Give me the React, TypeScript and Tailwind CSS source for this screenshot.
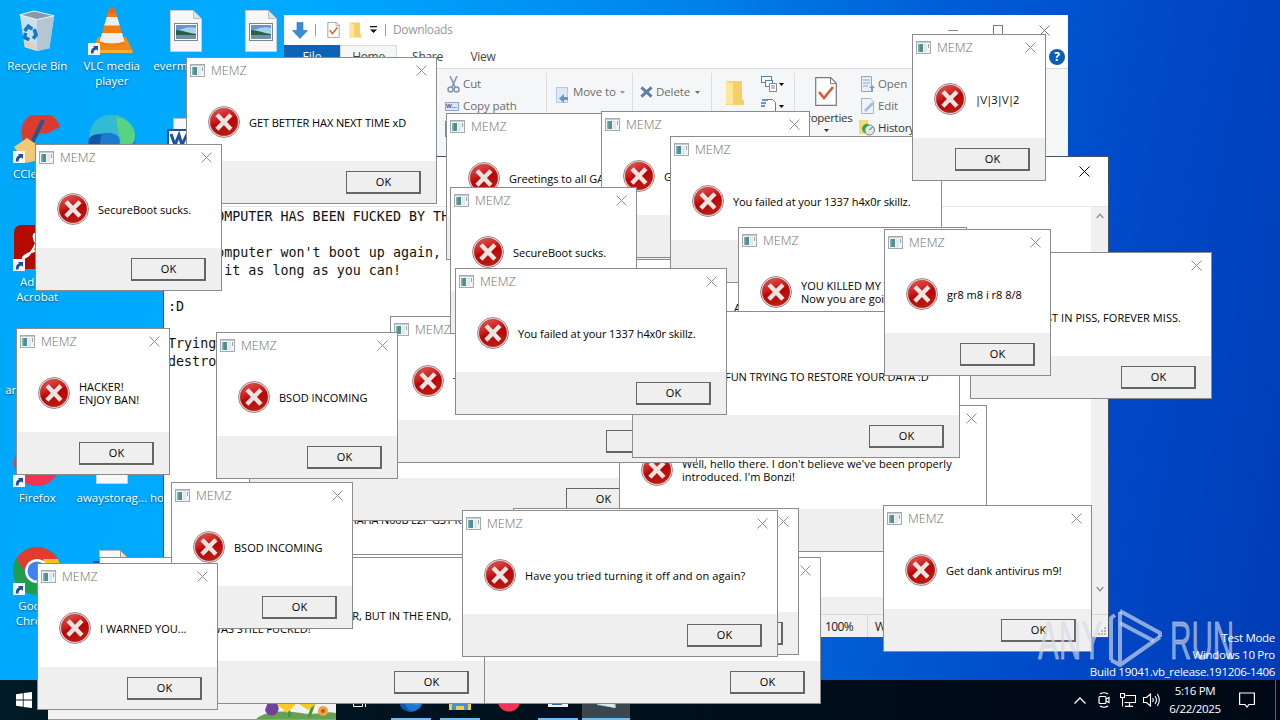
import type { ReactNode } from "react";

type DialogData = {
  x: number;
  y: number;
  w: number;
  lines?: string[];
  textClass?: string;
};

// Painted in order, the last one is on top
const dialogs: DialogData[] = [
  { x: 271, y: 454, w: 246, lines: ["HAHAHA N00B L2P G3T R3KT"], textClass: "tracking-[-0.15px]" },
  { x: 345, y: 554, w: 136 },
  { x: 249, y: 374, w: 408 },
  { x: 619, y: 405, w: 368, lines: ["Well, hello there. I don't believe we've been properly", "introduced. I'm Bonzi!"], textClass: "tracking-[0.05px]" },
  { x: 390, y: 316, w: 307, lines: ["T"] },
  { x: 446, y: 113, w: 240, lines: ["Greetings to all GAMERS"] },
  { x: 601, y: 111, w: 209, lines: ["Get dank antivirus m9!"] },
  { x: 450, y: 187, w: 187, lines: ["SecureBoot sucks."] },
  { x: 671, y: 242, w: 200, lines: ["A new"], textClass: "-ml-2" },
  { x: 670, y: 136, w: 272, lines: ["You failed at your 1337 h4x0r skillz."], textClass: "tracking-[-0.08px]" },
  { x: 738, y: 227, w: 229, lines: ["YOU KILLED MY TROJAN!", "Now you are going to die."] },
  { x: 632, y: 311, w: 328, lines: ["HAVE FUN TRYING TO RESTORE YOUR DATA :D"], textClass: "tracking-[-0.1px]" },
  { x: 455, y: 268, w: 272, lines: ["You failed at your 1337 h4x0r skillz."], textClass: "tracking-[-0.08px]" },
  { x: 970, y: 252, w: 242, lines: ["REST IN PISS, FOREVER MISS."], textClass: "tracking-[0.04px]" },
  { x: 884, y: 229, w: 167, lines: ["gr8 m8 i r8 8/8"] },
  { x: 912, y: 34, w: 134, lines: ["|\\/|3|\\/|2"], textClass: "tracking-[-0.95px]" },
  { x: 186, y: 57, w: 251, lines: ["GET BETTER HAX NEXT TIME xD"], textClass: "tracking-[-0.1px]" },
  { x: 35, y: 144, w: 187, lines: ["SecureBoot sucks."] },
  { x: 216, y: 332, w: 182, lines: ["BSOD INCOMING"] },
  { x: 16, y: 328, w: 154, lines: ["HACKER!", "ENJOY BAN!"] },
  { x: 470, y: 557, w: 351 },
  { x: 99, y: 557, w: 386, lines: ["YOU TRIED SO HARD AND GOT SO FAR, BUT IN THE END,", "YOUR PC WAS STILL FUCKED!"] },
  { x: 171, y: 482, w: 182, lines: ["BSOD INCOMING"] },
  { x: 37, y: 563, w: 181, lines: ["I WARNED YOU..."] },
  { x: 513, y: 508, w: 286 },
  { x: 462, y: 510, w: 316, lines: ["Have you tried turning it off and on again?"], textClass: "tracking-[0.12px]" },
  { x: 883, y: 505, w: 209, lines: ["Get dank antivirus m9!"] },
];

function CloseIcon({ className = "text-[#8c8c8c]" }: { className?: string }) {
  return (
    <svg className={`w-[11px] h-[11px] shrink-0 ${className}`} viewBox="0 0 11 11" fill="none" stroke="currentColor" strokeWidth="1">
      <path d="M.5 .5l10 10M10.5 .5l-10 10" />
    </svg>
  );
}

function AppIcon() {
  return (
    <svg className="w-[15px] h-[13px] shrink-0" viewBox="0 0 15 13">
      <rect x=".5" y=".5" width="14" height="12" fill="#f2f4f5" stroke="#a3abb0" />
      <path d="M1 1.5h13" stroke="#c3ccd0" />
      <rect x="2" y="3" width="5" height="8" fill="#4f9189" />
      <path d="M2 3h1.500v8H2z" fill="#86aebb" />
      <rect x="8" y="3" width="3" height="8" fill="#dfe8f0" />
      <path d="M12.5 3v4" stroke="#9aa5a8" />
    </svg>
  );
}

function ErrorIcon() {
  return (
    <svg className="w-8 h-8 shrink-0" viewBox="0 0 32 32">
      <defs>
        <linearGradient id="errRed" x1="0" y1="0" x2="0.4" y2="1">
          <stop offset="0" stopColor="#e4605a" />
          <stop offset=".45" stopColor="#cc2020" />
          <stop offset=".6" stopColor="#b90508" />
          <stop offset="1" stopColor="#bd1a12" />
        </linearGradient>
      </defs>
      <circle cx="16" cy="16" r="15.5" fill="#e9e2e0" stroke="#8d6a68" strokeWidth=".8" />
      <circle cx="16" cy="16" r="13.8" fill="url(#errRed)" stroke="#a4201f" strokeWidth=".5" />
      <path d="M10.6 10.300l10.800 11.400M21.400 10.300L10.400 21.700" stroke="#e9e6e2" strokeWidth="4.4" strokeLinecap="square" />
    </svg>
  );
}

function Dialog({ x, y, w, lines = [], textClass = "" }: DialogData) {
  return (
    <div
      className="absolute flex h-[147px] flex-col border border-[#8b8b8b] bg-white"
      style={{ left: x, top: y, width: w }}
    >
      <div className="flex h-6 shrink-0 items-center pl-[3px] pr-[9px]">
        <AppIcon />
        <span className="ml-[6px] flex-1 text-[12.5px] font-light leading-[23px] text-[#707070]">MEMZ</span>
        <CloseIcon />
      </div>
      <div className="flex flex-1 items-start pl-[21px] pt-6">
        <ErrorIcon />
        <div className={`ml-[9px] flex h-8 flex-col justify-center whitespace-nowrap text-[11px] leading-[13px] text-black ${textClass}`}>
          {lines.map((line) => (
            <div key={line}>{line}</div>
          ))}
        </div>
      </div>
      <div className="flex h-[42px] shrink-0 items-start justify-end bg-[#efefef] pr-[15px] pt-[10px]">
        <button className="h-[23px] w-[75px] border border-b-2 border-r-2 border-[#656565] bg-[#efefef] pl-px text-[11px] leading-[20px] text-black">
          OK
        </button>
      </div>
    </div>
  );
}

function Shortcut() {
  return (
    <svg className="absolute left-0 bottom-0 h-3 w-3" viewBox="0 0 12 12">
      <rect width="12" height="12" fill="#f4f8fc" />
      <path d="M3 10.5C2.6 7 4 5 6.2 4.6L5 3h5v5L8.600 6.500C6 7 5.500 8.500 5.500 10.500z" fill="#1f4f9c" />
    </svg>
  );
}

function PictureFile() {
  return (
    <svg className="h-[42px] w-8" viewBox="0 0 32 42">
      <path d="M.5 .5h23l8 8v33H.5z" fill="#f7f7f7" stroke="#c9cdd0" />
      <path d="M23.500 .5v8h8z" fill="#dfe3e6" stroke="#a9b0b5" strokeWidth=".7" />
      <rect x="4.500" y="13.500" width="23" height="17" fill="#fff" stroke="#7f868b" />
      <rect x="6" y="15" width="20" height="14" fill="#a9d1ee" />
      <path d="M6 15h20v3c-7-2-14 1-20 3z" fill="#6295d2" />
      <path d="M6 20c6 0 12 3 20 4v1H6z" fill="#2d5f46" />
      <path d="M6 25h20v4H6z" fill="#6b95a6" />
    </svg>
  );
}

function WordFile() {
  return (
    <svg className="h-[42px] w-10" viewBox="0 0 40 42">
      <path d="M7.500 .5h21l8 8v33h-29z" fill="#f9f9f9" stroke="#b8bcc0" />
      <path d="M28.500 .5v8h8z" fill="#e4e4e4" stroke="#888" strokeWidth=".8" />
      <rect x="1" y="11" width="24" height="22" fill="#1d50a8" />
      <rect x="3" y="13" width="20" height="18" fill="#fff" />
      <path d="M5 16l4 11 4-10 3 10 5-11" fill="none" stroke="#1d50a8" strokeWidth="3" />
      <path d="M27 15h7M27 20h7M27 25h7M27 30h7" stroke="#5b83bd" />
    </svg>
  );
}

function RecycleBin() {
  return (
    <svg className="h-[44px] w-[40px]" viewBox="0 0 42 44">
      <path d="M3 5l36 1-5 34-13 3-13-4z" fill="#dbe4ea" opacity=".92" />
      <path d="M21 9l18-3-5 34-13 3z" fill="#b5c6d3" />
      <path d="M3 5l15-4 21 5-18 4z" fill="#8798a6" stroke="#eef5fa" />
      <path d="M8 32l12 4v6l-11-3z" fill="#e8cdbd" />
      <g fill="none" stroke="#1678c7" strokeWidth="3.800">
        <path d="M8 22l4-5 4 3M18 20l2 6-3 4M13 31l-5-2 1-5" />
      </g>
    </svg>
  );
}

function VlcIcon() {
  return (
    <svg className="h-[46px] w-11" viewBox="0 0 44 46">
      <path d="M8 29h28l7 14q0 2-2 2H3q-2 0-2-2z" fill="#f28a12" />
      <path d="M2 42h40v3H2z" fill="#fbb03a" />
      <path d="M19 1q3-2 6 0l10 35q-13 6-26 0z" fill="#f27c0e" />
      <path d="M16.800 9h10.400l2.600 8.500H14.200zM12 25h20l2.500 8.500q-12.500 4-25 0z" fill="#edeef0" />
      <path d="M19 1q3-2 6 0l.8 4h-7.600z" fill="#e0671b" />
    </svg>
  );
}

function CCleanerIcon() {
  return (
    <svg className="h-12 w-12" viewBox="0 0 48 48">
      <path d="M47 12A19 19 0 0 0 9 22Q10 36 22 42L44 38 34 33A8 8 0 1 1 33 19z" fill="#dc3b2f" />
      <path d="M30 5L19 28" stroke="#24578b" strokeWidth="4" />
      <path d="M1 32l13-9 9 6 3 16-13 3z" fill="#f3c877" />
    </svg>
  );
}

function EdgeIcon() {
  return (
    <svg className="h-12 w-12" viewBox="0 0 48 48">
      <circle cx="24" cy="24" r="23.500" fill="#1b79cf" />
      <path d="M1 24a23 23 0 0 1 46-3c1 9-8 13-17 11 5-8-1-15-10-14C11 18 3 20 1 24z" fill="#33bbd5" />
      <path d="M28 2c13 2 20 11 19 20-1 8-9 12-17 10 4-5 3-9 1-12z" fill="#58d481" />
      <path d="M14 20c-6 12 2 24 14 27C9 49-2 36 1 24c3-5 8-5 13-4z" fill="#1255a5" />
    </svg>
  );
}

function AcrobatIcon() {
  return (
    <svg className="h-[44px] w-[46px]" viewBox="0 0 46 44">
      <rect width="46" height="44" rx="7" fill="#b30b00" />
      <path d="M10 33c6-2 14-14 13-22-1-4-4-2-3 2 2 8 8 13 16 14 4 0 3-4-2-4-8 0-15 3-22 7-3 2-4 4-2 3z" fill="none" stroke="#fff" strokeWidth="2.200" />
    </svg>
  );
}

function FirefoxIcon() {
  return (
    <svg className="h-12 w-12" viewBox="0 0 48 48">
      <circle cx="24" cy="24" r="23" fill="#f5324f" />
      <circle cx="26" cy="22" r="11" fill="#7b3fe4" />
      <path d="M24 1c14 2 22 10 23 20-5-6-9-6-13-8z" fill="#ffbd2f" />
    </svg>
  );
}

function ChromeIcon() {
  return (
    <svg className="h-12 w-12" viewBox="0 0 48 48">
      <circle cx="24" cy="24" r="24" fill="#1f9d4c" />
      <path d="M3.500 12A24 24 0 0 1 44.800 12L24 14l-9 14z" fill="#e33b2e" />
      <path d="M44.800 12A24 24 0 0 1 24 48l10-18-4-18z" fill="#fbc116" />
      <circle cx="24" cy="24" r="12" fill="#fff" />
      <circle cx="24" cy="24" r="9.500" fill="#3f83f1" />
    </svg>
  );
}

type DesktopItem = { label?: string; icon?: ReactNode; shortcut?: boolean };

const desktopItems: DesktopItem[] = [
  { label: "Recycle Bin", icon: <RecycleBin /> },
  { label: "VLC media player", icon: <VlcIcon />, shortcut: true },
  { label: "evermedia...", icon: <PictureFile /> },
  { icon: <PictureFile /> },
  { label: "CCleaner", icon: <CCleanerIcon />, shortcut: true },
  { icon: <EdgeIcon /> },
  { icon: <WordFile /> },
  {},
  { label: "Adobe Acrobat", icon: <AcrobatIcon />, shortcut: true },
  {},
  {},
  {},
  { label: "areaenglis...", icon: <WordFile /> },
  {},
  {},
  {},
  { label: "Firefox", icon: <FirefoxIcon />, shortcut: true },
  { label: "awaystorag...", icon: <PictureFile /> },
  { label: "homebooks..." },
  {},
  { label: "Google Chrome", icon: <ChromeIcon />, shortcut: true },
  { icon: <WordFile /> },
  {},
  {},
];

function DesktopIcons() {
  return (
    <div className="grid w-[298px] auto-rows-[108px] grid-cols-4">
      {desktopItems.map((item, i) => (
        <div key={i} className="flex flex-col items-center pt-[7px]">
          <div className="relative flex h-12 w-12 shrink-0 items-center justify-center">
            {item.icon}
            {item.shortcut && <Shortcut />}
          </div>
          <div className="mt-[3px] w-[73px] text-center text-[11.5px] leading-[15px] text-white [text-shadow:0_1px_2px_rgba(0,0,0,0.55)]">
            {item.label}
          </div>
        </div>
      ))}
    </div>
  );
}

function Caret({ className = "text-black" }: { className?: string }) {
  return (
    <svg className={`h-[3px] w-[5px] shrink-0 ${className}`} viewBox="0 0 5 3" fill="currentColor">
      <path d="M0 0h5L2.500 3z" />
    </svg>
  );
}

function Folder({ className }: { className: string }) {
  return (
    <svg className={className} viewBox="0 0 20 28" preserveAspectRatio="none">
      <path d="M1 1h16v20l2 1v5H1z" fill="#f6cf66" />
      <path d="M1 1l7 3v24l-7-3z" fill="#ffe69a" />
    </svg>
  );
}

function CheckPage({ className }: { className: string }) {
  return (
    <svg className={className} viewBox="0 0 22 29" fill="none">
      <path d="M.7 .7h15l5.600 5.600v22H.7z" fill="#fff" stroke="#7a7a7a" strokeWidth="1.200" />
      <path d="M15.500 .7v6h6" stroke="#7a7a7a" />
      <path d="M4 15l5 6 9-11" stroke="#e2562b" strokeWidth="2.600" />
    </svg>
  );
}

function Explorer() {
  return (
    <div className="absolute left-[284px] top-[15px] h-[160px] w-[784px] bg-white text-[12px] leading-[16px] text-[#6d6d6d]">
      <div className="flex h-[30px] items-center pl-2 pr-[18px]">
        <svg className="h-[17px] w-4" viewBox="0 0 16 17">
          <path d="M5 .5h6v8h4.500L8 16.500 .5 8.500H5z" fill="#3a8bd6" stroke="#2a6fb5" strokeWidth=".6" />
        </svg>
        <div className="ml-[7px] h-3 w-px bg-[#9a9a9a]" />
        <CheckPage className="ml-[11px] h-4 w-[13px]" />
        <Folder className="ml-[9px] h-4 w-[13px]" />
        <svg className="ml-2 h-2 w-[7px]" viewBox="0 0 7 8">
          <path d="M0 0h7v1.200H0zM0 3.500h7L3.500 7z" fill="#111" />
        </svg>
        <div className="ml-2 h-3 w-px bg-[#9a9a9a]" />
        <span className="ml-[7px] flex-1 tracking-[-0.35px] text-[#999]">Downloads</span>
        <div className="h-px w-[10px] bg-[#888]" />
        <div className="ml-[35px] mr-[36px] size-[10px] border border-[#777]" />
        <CloseIcon className="text-[#777]" />
      </div>
      <div className="flex h-[23px] leading-[24px] text-[#444]">
        <div className="w-14 bg-[#0d63b5] text-center text-white">File</div>
        <div className="w-[57px] border border-b-0 border-[#dadbdc] bg-[#f5f6f7] text-center leading-[22px] tracking-[-0.3px]">Home</div>
        <div className="w-[61px] text-center tracking-[-0.3px]">Share</div>
        <div className="w-[50px] text-center tracking-[-0.3px]">View</div>
        <div className="flex flex-1 items-center justify-end pr-[3px]">
          <div className="size-4 rounded-full bg-[#0a5eb8] text-center text-[12px] font-bold leading-4 text-white">?</div>
        </div>
      </div>
      <div className="flex h-[107px] items-start border-t border-[#dadbdc] bg-[#f5f6f7] pt-1 text-[11.5px] tracking-[-0.1px]">
        <div className="flex h-[88px] w-[263px] flex-col border-r border-[#dcdde0] pl-[161px]">
          <div className="flex h-[22px] items-center gap-[3px] pl-0.5">
            <svg className="h-[17px] w-[13px]" viewBox="0 0 13 17" fill="none" stroke="#7e93b3" strokeWidth="1.500">
              <path d="M3 0l5 11M10 0L5 11" />
              <circle cx="3.500" cy="13.500" r="2.500" />
              <circle cx="9.500" cy="13.500" r="2.500" />
            </svg>
            <span>Cut</span>
          </div>
          <div className="flex h-[22px] items-center gap-1">
            <div className="h-[9px] w-[14px] border border-[#8ca7d8] bg-[#dce6f8] text-[6px] font-bold leading-[7px] text-[#3e5f9c]">W...</div>
            <span>Copy path</span>
          </div>
          <div className="mt-1 h-4 w-3 border-2 border-[#7c889c]" />
          <div className="-ml-[62px] mt-[5px] leading-4">Clipboard</div>
        </div>
        <div className="flex h-[42px] w-[86px] items-center border-r border-[#dcdde0] pl-[9px]">
          <svg className="-mb-px h-4 w-[13px]" viewBox="0 0 13 16">
            <rect x=".5" y=".5" width="11" height="15" fill="#dce8f6" stroke="#b5c9e4" />
            <path d="M12 10H8V7l-5 4.500L8 16v-3h4z" fill="#6c93c9" />
          </svg>
          <span className="ml-[4px] -mt-1 whitespace-nowrap">Move to</span>
          <Caret className="-mt-1 ml-[4px] text-[#9a9a9a]" />
        </div>
        <div className="flex h-[42px] w-[79px] items-center border-r border-[#dcdde0] pb-1 pl-[7px]">
          <svg className="h-3 w-[13px]" viewBox="0 0 14 12" stroke="#5f7da6" strokeWidth="3.200">
            <path d="M1.500 1l11 10M12.500 1l-11 10" />
          </svg>
          <span className="ml-[3px]">Delete</span>
          <Caret className="ml-[5px]" />
        </div>
        <div className="flex h-[88px] w-[83px] items-start border-r border-[#dcdde0] pl-[13px] pt-[7px]">
          <Folder className="h-[26px] w-[20px]" />
          <div className="-mt-1 ml-4 flex flex-col gap-[6px]">
            <div className="flex items-center gap-[2px]">
              <svg className="h-4 w-4" viewBox="0 0 16 16" fill="#fff" stroke="#4f83a8">
                <rect x=".5" y=".5" width="10" height="6" />
                <rect x="4.500" y="4.500" width="7" height="6" />
                <path d="M8.500 7.500h7v8h-7zM10 10h4M10 12h4" stroke="#888" />
              </svg>
              <Caret />
            </div>
            <div className="flex items-center gap-[2px]">
              <svg className="h-4 w-4" viewBox="0 0 16 16" fill="none">
                <path d="M6.500 1.500h5l3 3v11h-8" fill="#fff" stroke="#777" />
                <path d="M1 2h6M0 5h5M0 8h4" stroke="#3978b5" strokeWidth="1.500" />
              </svg>
              <Caret />
            </div>
          </div>
        </div>
        <div className="flex h-[88px] w-[64px] flex-col items-center pr-[2px] pt-1 text-[#333]">
          <CheckPage className="h-[29px] w-[22px]" />
          <span className="mt-1 tracking-[-0.3px]">Properties</span>
          <Caret className="mt-[3px]" />
        </div>
        <div className="flex flex-col pl-0.5">
          <div className="flex h-[22px] items-center gap-[3px]">
            <svg className="h-4 w-[14px]" viewBox="0 0 14 16">
              <path d="M.5 .5h10v15H.5zM2 4h7M2 7h7M2 10h5" fill="#e6eef9" stroke="#8fa8d0" />
              <path d="M10 16v-4H8l3-3 3 3h-2v4z" fill="#7f9dcb" />
            </svg>
            <span>Open</span>
          </div>
          <div className="flex h-[22px] items-center gap-[3px]">
            <svg className="h-4 w-[14px]" viewBox="0 0 14 16">
              <path d="M.5 .5h9l3 3v12H.5z" fill="#eef3f9" stroke="#9fb4cf" />
              <path d="M3 12l8-8 2 2-8 8z" fill="#a4bdd9" />
            </svg>
            <span>Edit</span>
          </div>
          <div className="-ml-[2px] flex h-[22px] items-center gap-[3px] text-[#333]">
            <svg className="h-4 w-4" viewBox="0 0 16 16">
              <path d="M0 0h9v14H0z" fill="#f7d978" />
              <circle cx="10.500" cy="10" r="5" fill="#e1e7e9" stroke="#77868a" />
              <path d="M3 8c1-4 5-5 7-4l-2 3c-2 0-2 3-1 6-3 0-4-3-4-5z" fill="#3da542" />
              <path d="M10.500 10l3-3" stroke="#555" />
            </svg>
            <span className="tracking-[-0.25px]">History</span>
          </div>
        </div>
      </div>
    </div>
  );
}

function Notepad() {
  return (
    <div className="absolute left-[163px] top-[156px] flex h-[482px] w-[946px] flex-col border border-[#3f5368] bg-white">
      <div className="flex h-[29px] shrink-0 items-center justify-end pr-[18px]">
        <CloseIcon className="text-black" />
      </div>
      <div className="h-[21px] shrink-0 border-b border-[#e6e6e6]" />
      <div className="flex flex-1">
        <pre className="flex-1 pl-1 pt-px font-['DejaVu_Sans_Mono',monospace] text-[13.35px] leading-[18.1px] text-[#111]">
          {`YOUR COMPUTER HAS BEEN FUCKED BY THE MEMZ TROJAN.

Your computer won't boot up again,
so use it as long as you can!

:D

Trying to kill MEMZ will cause your system to be
destroyed instantly, so don't try it :D`}
        </pre>
        <div className="flex w-[17px] flex-col items-center justify-between bg-[#f0f0f0] py-[6px] pb-[5px]">
          <svg className="h-[6px] w-2" viewBox="0 0 8 6" fill="none" stroke="#9b9b9b" strokeWidth="1.600">
            <path d="M.7 5L4 1.300 7.300 5" />
          </svg>
          <svg className="h-[6px] w-2" viewBox="0 0 8 6" fill="none" stroke="#9b9b9b" strokeWidth="1.600">
            <path d="M.7 1L4 4.700 7.300 1" />
          </svg>
        </div>
      </div>
      <div className="h-[17px] shrink-0 bg-[#f0f0f0]" />
      <div className="flex h-[23px] shrink-0 border-t border-[#d7d7d7] bg-[#f0f0f0] pl-[656px] text-[12px] leading-[23px] text-[#222]">
        <div className="w-[47px] pl-[5px] tracking-[-0.6px]">100%</div>
        <div className="flex-1 whitespace-nowrap border-l border-[#d7d7d7] pl-[7px]">Windows (CRLF)</div>
        <svg className="mr-[1px] mt-3 size-[9px]" viewBox="0 0 9 9" fill="#b5b5b5">
          <path d="M6 0h2v2H6zM6 3h2v2H6zM6 6h2v2H6zM3 3h2v2H3zM3 6h2v2H3zM0 6h2v2H0z" />
        </svg>
      </div>
    </div>
  );
}

function Taskbar() {
  return (
    <div className="absolute bottom-0 left-0 flex h-10 w-full bg-gradient-to-r from-[#001a26] via-[#000f1c] to-[#000915] text-white">
      <div className="flex w-12 items-center justify-center">
        <svg className="size-4" viewBox="0 0 16 16" fill="#fff">
          <path d="M0 2.200l6.800-1v6.400H0zM7.600 1L16 0v7.600H7.600zM0 8.400h6.800v6.400l-6.800-1zM7.600 8.400H16V16l-8.400-1.100z" />
        </svg>
      </div>
      <div className="flex w-72 items-end justify-end border-b border-[#999] bg-[#f2f2f2]">
        <svg className="h-10 w-20" viewBox="0 0 80 40">
          <path d="M0 40c8-8 30-9 45-6s25-3 35 0v6z" fill="#66a255" />
          <path d="M34 38l-3-12M53 38l5-14" stroke="#3f9b36" strokeWidth="3" />
          <path d="M24 16l6 7 7-8 2 11-8 8-9-8zM44 17l7 5 7-6 2 9-8 6-9-6z" fill="#f8cb24" />
          <path d="M12 23q4-6 8 0 6 8-1 13-8 2-10-5z" fill="#6c4397" />
          <circle cx="67" cy="32" r="5" fill="#f6a23b" />
          <circle cx="67" cy="32" r="2" fill="#b05c16" />
        </svg>
      </div>
      <div className="flex w-[48px] items-center justify-center">
        <svg className="h-[13px] w-[15px]" viewBox="0 0 15 13" fill="none" stroke="#fff">
          <path d="M.5 0v2.500h9V0M.5 4.500h9v8h-9zM12.500 0v13" />
        </svg>
      </div>
      <div className="flex h-10 pl-[2px]">
        <div className="flex w-[49px] items-center justify-center">
          <div className="flex h-full w-10 items-center justify-center border-b-2 border-[#76b9ed] pt-[2px] [&>svg]:size-6">
            <EdgeIcon />
          </div>
        </div>
        <div className="flex w-[49px] items-center justify-center">
          <div className="flex h-full w-10 items-center justify-center border-b-2 border-[#76b9ed] pt-[2px]">
            <svg className="h-5 w-[22px]" viewBox="0 0 22 20">
              <path d="M0 0h22v20H0z" fill="#f8ca45" />
              <path d="M3 12h16v8h-4v-4H7v4H3z" fill="#3e94de" />
            </svg>
          </div>
        </div>
        <div className="flex w-[49px] items-center justify-center [&>svg]:size-6">
          <FirefoxIcon />
        </div>
        <div className="flex w-[49px] items-center justify-center">
          <div className="flex h-full w-10 items-center justify-center border-b-2 border-[#76b9ed]">
            <svg className="h-[16px] w-5" viewBox="0 0 20 16">
              <path d="M0 0h20v16H0z" fill="#f4f4f4" />
              <path d="M4 9h10v5H4z" fill="#2764b8" />
            </svg>
          </div>
        </div>
        <div className="flex h-full w-12 items-center justify-center border-b-2 border-[#76b9ed] bg-[#3b474e]">
          <svg className="h-6 w-6" viewBox="0 0 24 24">
            <path d="M5 4l15-2 2 19-19-3z" fill="#85c7dc" />
            <path d="M3 17l18 4-1-6z" fill="#dce8ea" />
          </svg>
        </div>
      </div>
      <div className="ml-auto flex items-center">
        <svg className="h-[7px] w-3" viewBox="0 0 12 7" fill="none" stroke="#fff" strokeWidth="1.300">
          <path d="M.5 6.500L6 1l5.500 5.500" />
        </svg>
        <svg className="ml-3 h-4 w-3" viewBox="0 0 12 16" fill="none" stroke="#fff" strokeWidth="1.200">
          <rect x="1" y="4.500" width="7" height="7" rx="1" />
          <path d="M8 7l3-1.500v5L8 9M2 2q4-2.500 8 0M2 14q4 2.500 8 0" />
        </svg>
        <svg className="ml-[10px] h-[14px] w-4" viewBox="0 0 16 14" fill="none" stroke="#fff" strokeWidth="1.100">
          <path d="M5.500 2.500h10v7h-11M9.500 9.500v3.500M5 13.400h8M.5 .500h4v4h-4zM2.500 4.500v9" />
        </svg>
        <svg className="ml-[7px] h-[14px] w-[17px]" viewBox="0 0 17 14" fill="none" stroke="#fff" strokeWidth="1.100">
          <path d="M.5 4.500h3l4-3.500v12l-4-3.500h-3zM9.500 5q1.500 2 0 4M12 3q3 4 0 8M14.300 1q4 6 0 12" />
        </svg>
        <div className="ml-2 w-[54px] text-center text-[11.5px] leading-[18px] tracking-[-0.35px]">
          <div>5:16 PM</div>
          <div>6/22/2025</div>
        </div>
        <svg className="ml-[17px] size-4" viewBox="0 0 16 16" fill="none" stroke="#fff" strokeWidth="1.200">
          <path d="M.6 1h14.800v11.500H10L8 15l-2-2.500H.6z" />
        </svg>
        <div className="ml-5 mr-1 h-10 w-px bg-[#58646d]" />
      </div>
    </div>
  );
}

function Watermark() {
  return (
    <div className="absolute bottom-[49px] right-[46px] flex h-[60px] w-[196px] items-center justify-between text-[53px] leading-[60px] text-[#d6dae4]/65">
      <div className="w-[62px]">
        <div className="w-max origin-left scale-x-[0.59] font-['Liberation_Sans',sans-serif] [-webkit-text-stroke:0.8px_rgba(214,218,228,0.5)]">ANY</div>
      </div>
      <svg className="-mt-[6px] h-[60px] w-[56px] shrink-0" viewBox="0 0 56 60" fill="none" stroke="#d0d8ea" strokeOpacity=".68" strokeWidth="4" strokeLinejoin="round">
        <path d="M8 7l-4 3v42M13 4v52M4 52l9 5 40-28" />
        <path d="M13 3l40 22v4M13 15l34 18" />
      </svg>
      <div className="w-[64px]">
        <div className="w-max origin-left scale-x-[0.56] font-['Liberation_Sans',sans-serif] [-webkit-text-stroke:0.8px_rgba(214,218,228,0.5)]">RUN</div>
      </div>
    </div>
  );
}

export default function App() {
  return (
    <div className="relative h-[720px] w-[1280px] overflow-hidden bg-[linear-gradient(100deg,#00a8fa_0%,#00aaff_22%,#0084ea_48%,#0060d8_66%,#0048c8_84%,#003cb4_100%)] font-['Open_Sans','Noto_Sans',sans-serif]">
      <DesktopIcons />
      <Explorer />
      <Notepad />
      <Taskbar />
      {dialogs.map((d, i) => (
        <Dialog key={i} {...d} />
      ))}
      <Watermark />
      <div className="absolute bottom-[40px] right-[5px] text-right text-[11.5px] leading-[17px] tracking-[-0.3px] text-white">
        <div>Test Mode</div>
        <div>Windows 10 Pro</div>
        <div>Build 19041.vb_release.191206-1406</div>
      </div>
    </div>
  );
}
